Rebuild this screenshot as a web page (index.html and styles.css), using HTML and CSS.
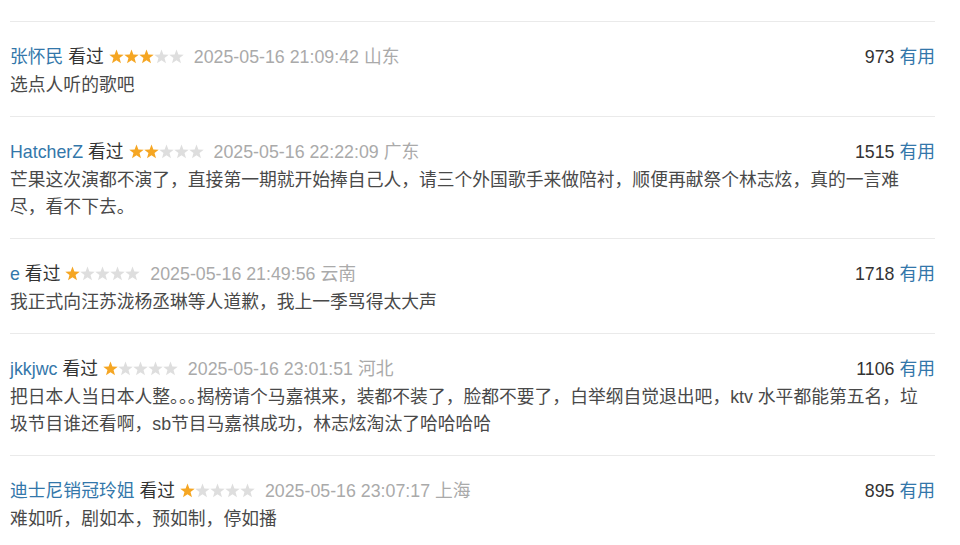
FILE: index.html
```html
<!DOCTYPE html>
<html lang="zh-CN">
<head>
    <meta charset="UTF-8">
    <meta name="viewport" content="width=device-width, initial-scale=1.0">
    <title>短评</title>
    <link rel="stylesheet" href="styles.css">
</head>
<body>

    <!-- shared star shape -->
    <svg class="defs" width="0" height="0" aria-hidden="true">
        <symbol id="star" viewBox="0 0 15 15">
            <path d="M7.5 .5L9.38 5.51 14.73 5.75 10.54 9.09 11.97 14.25 7.5 11.3 3.03 14.25 4.46 9.09 .27 5.75 5.62 5.51Z"/>
        </symbol>
    </svg>

    <div class="comment-list">

        <div class="comment-item">
            <div class="comment-info">
                <div class="info-left">
                    <a class="user" href="#">张怀民</a> <span class="status">看过</span>
                    <span class="stars" data-rating="3"></span>
                    <span class="time">2025-05-16 21:09:42</span> <span class="loc">山东</span>
                </div>
                <div class="votes"><span class="count">973</span> <a href="#">有用</a></div>
            </div>
            <p class="comment-text">选点人听的歌吧</p>
        </div>

        <div class="comment-item">
            <div class="comment-info">
                <div class="info-left">
                    <a class="user" href="#">HatcherZ</a> <span class="status">看过</span>
                    <span class="stars" data-rating="2"></span>
                    <span class="time">2025-05-16 22:22:09</span> <span class="loc">广东</span>
                </div>
                <div class="votes"><span class="count">1515</span> <a href="#">有用</a></div>
            </div>
            <p class="comment-text">芒果这次演都不演了，直接第一期就开始捧自己人，请三个外国歌手来做陪衬，顺便再献祭个林志炫，真的一言难尽，看不下去。</p>
        </div>

        <div class="comment-item">
            <div class="comment-info">
                <div class="info-left">
                    <a class="user" href="#">e</a> <span class="status">看过</span>
                    <span class="stars" data-rating="1"></span>
                    <span class="time">2025-05-16 21:49:56</span> <span class="loc">云南</span>
                </div>
                <div class="votes"><span class="count">1718</span> <a href="#">有用</a></div>
            </div>
            <p class="comment-text">我正式向汪苏泷杨丞琳等人道歉，我上一季骂得太大声</p>
        </div>

        <div class="comment-item">
            <div class="comment-info">
                <div class="info-left">
                    <a class="user" href="#">jkkjwc</a> <span class="status">看过</span>
                    <span class="stars" data-rating="1"></span>
                    <span class="time">2025-05-16 23:01:51</span> <span class="loc">河北</span>
                </div>
                <div class="votes"><span class="count">1106</span> <a href="#">有用</a></div>
            </div>
            <p class="comment-text">把日本人当日本人整<span class="half">。。。</span>揭榜请个马嘉祺来，装都不装了，脸都不要了，白举纲自觉退出吧，ktv 水平都能第五名，垃圾节目谁还看啊，sb节目马嘉祺成功，林志炫淘汰了哈哈哈哈</p>
        </div>

        <div class="comment-item">
            <div class="comment-info">
                <div class="info-left">
                    <a class="user" href="#">迪士尼销冠玲姐</a> <span class="status">看过</span>
                    <span class="stars" data-rating="1"></span>
                    <span class="time">2025-05-16 23:07:17</span> <span class="loc">上海</span>
                </div>
                <div class="votes"><span class="count">895</span> <a href="#">有用</a></div>
            </div>
            <p class="comment-text">难如听，剧如本，预如制，停如播</p>
        </div>

    </div>

    <script>
        // Fill in the rating stars
        document.querySelectorAll('.stars').forEach(function (el) {
            const rating = parseInt(el.dataset.rating, 10);
            let html = '';
            for (let i = 1; i <= 5; i++) {
                html += '<svg class="star ' + (i <= rating ? 'on' : 'off') + '"><use href="#star"/></svg>';
            }
            el.innerHTML = html;
        });
    </script>

</body>
</html>
```

FILE: styles.css
```css
body {
    font-family: 'Liberation Sans', Arial, 'Noto Sans CJK SC', sans-serif;
    font-size: 17.8px;
    color: #494949;
    margin: 0;
    padding: 21px 0 0 10px;
    background: #fff;
}

a {
    color: #37a;
    text-decoration: none;
}

.defs {
    position: absolute;
}

.comment-list {
    width: 925px;
}

.comment-item {
    border-top: 1px solid #eaeaea;
    padding: 21px 0 17px;
}

.comment-info {
    display: flex;
    justify-content: space-between;
    align-items: center;
    line-height: 28px;
}

.status {
    color: #333;
}

.stars {
    display: inline-flex;
    vertical-align: -1px;
    margin-right: 5px;
}

.star {
    width: 15px;
    height: 15px;
}

.star.on {
    fill: #f5a623;
}

.star.off {
    fill: #dedede;
}

.time,
.loc {
    color: #aaa;
}

.votes .count {
    color: #333;
}

.comment-text {
    margin: 1px 0 0;
    padding-right: 12px;
    line-height: 27px;
}

.half {
    font-feature-settings: "halt";
}
```
